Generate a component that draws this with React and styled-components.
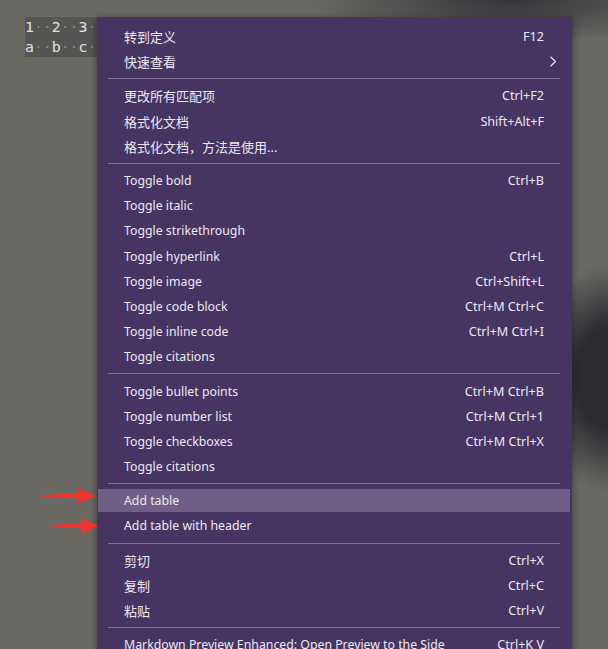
import React from 'react';
import styled, { createGlobalStyle } from 'styled-components';

const GlobalStyle = createGlobalStyle`
  html, body {
    margin: 0;
    height: 100%;
    overflow: hidden;
  }
  body {
    background:
      radial-gradient(ellipse 210px 45px at 510px 0px, rgba(48, 50, 55, 0.95), rgba(48, 50, 55, 0) 100%),
      radial-gradient(ellipse 80px 115px at 612px 378px, #2a2c31 45%, rgba(42, 44, 49, 0) 100%),
      #6b6964;
  }
  #root {
    height: 100%;
  }
`;

const Desktop = styled.div`
  position: relative;
  height: 100%;
  padding: 17px 0 0 25px;
  box-sizing: border-box;
`;

const CodeTable = styled.div`
  width: 120px;
  background-color: #555553;
  font-family: "DejaVu Sans Mono", "Liberation Mono", monospace;
  font-size: 14.8px;
  line-height: 20px;
  color: #e2e2e0;
`;

const CodeLine = styled.div`
  white-space: pre;
`;

const Ws = styled.span`
  color: #85847f;
`;

const Menu = styled.div`
  position: absolute;
  top: 17px;
  left: 97px;
  width: 475px;
  padding: 7px 0 0;
  background-color: #463462;
  box-shadow: 0 2px 8px rgba(0, 0, 0, 0.45);
  font-family: "Noto Sans", "Noto Sans CJK SC", sans-serif;
  color: #ece8f2;
`;

const Item = styled.div`
  height: 25.2px;
  padding: 1.1px 2px 1.1px 1px;
  box-sizing: border-box;
`;

const ItemInner = styled.div`
  height: 100%;
  display: flex;
  align-items: center;
  justify-content: space-between;
  padding: 0 26px;
  background-color: ${p => (p.$active ? '#6f5f88' : 'transparent')};
`;

const Label = styled.span`
  font-size: ${p => (p.$cjk ? '13px' : '12.3px')};
  white-space: nowrap;
`;

const Shortcut = styled.span`
  font-size: 12.6px;
  white-space: nowrap;
`;

const Chevron = styled.svg`
  width: 8px;
  height: 11px;
  margin-right: -13px;
`;

const Separator = styled.div`
  height: 1px;
  margin: 4px 12px 4px 11px;
  background-color: #807196;
`;

const Arrows = styled.svg`
  position: absolute;
  left: 0;
  top: 480px;
  width: 110px;
  height: 60px;
`;

const groups = [
  [
    { label: '转到定义', key: 'F12', cjk: true },
    { label: '快速查看', sub: true, cjk: true },
  ],
  [
    { label: '更改所有匹配项', key: 'Ctrl+F2', cjk: true },
    { label: '格式化文档', key: 'Shift+Alt+F', cjk: true },
    { label: '格式化文档，方法是使用...', cjk: true },
  ],
  [
    { label: 'Toggle bold', key: 'Ctrl+B' },
    { label: 'Toggle italic' },
    { label: 'Toggle strikethrough' },
    { label: 'Toggle hyperlink', key: 'Ctrl+L' },
    { label: 'Toggle image', key: 'Ctrl+Shift+L' },
    { label: 'Toggle code block', key: 'Ctrl+M Ctrl+C' },
    { label: 'Toggle inline code', key: 'Ctrl+M Ctrl+I' },
    { label: 'Toggle citations' },
  ],
  [
    { label: 'Toggle bullet points', key: 'Ctrl+M Ctrl+B' },
    { label: 'Toggle number list', key: 'Ctrl+M Ctrl+1' },
    { label: 'Toggle checkboxes', key: 'Ctrl+M Ctrl+X' },
    { label: 'Toggle citations' },
  ],
  [
    { label: 'Add table', active: true },
    { label: 'Add table with header' },
  ],
  [
    { label: '剪切', key: 'Ctrl+X', cjk: true },
    { label: '复制', key: 'Ctrl+C', cjk: true },
    { label: '粘贴', key: 'Ctrl+V', cjk: true },
  ],
  [
    { label: 'Markdown Preview Enhanced: Open Preview to the Side', key: 'Ctrl+K V' },
  ],
];

function Row({ cells }) {
  return (
    <CodeLine>
      {cells.map((c, i) => (
        <React.Fragment key={i}>
          {i > 0 && <Ws>··</Ws>}
          {c}
        </React.Fragment>
      ))}
      <Ws>··</Ws>
    </CodeLine>
  );
}

export default function App() {
  return (
    <>
      <GlobalStyle />
      <Desktop>
        <CodeTable>
          <Row cells={['1', '2', '3']} />
          <Row cells={['a', 'b', 'c']} />
        </CodeTable>

        <Menu>
          {groups.map((group, gi) => (
            <React.Fragment key={gi}>
              {gi > 0 && <Separator />}
              {group.map((item, ii) => (
                <Item key={ii}>
                  <ItemInner $active={item.active}>
                    <Label $cjk={item.cjk}>{item.label}</Label>
                    {item.key && <Shortcut>{item.key}</Shortcut>}
                    {item.sub && (
                      <Chevron viewBox="0 0 8 11">
                        <path d="M1.5 0.8 L6.5 5.5 L1.5 10.2" fill="none" stroke="#ece8f2" strokeWidth="1.2" />
                      </Chevron>
                    )}
                  </ItemInner>
                </Item>
              ))}
            </React.Fragment>
          ))}
        </Menu>

        <Arrows viewBox="0 480 110 60">
          <polygon points="40,495.3 78,493 78,488 96,496 78,503.5 78,498.5 40,496.6" fill="#ee3530" />
          <polygon points="50,525.3 82,523 82,518 98,526 82,533.5 82,528.5 50,526.6" fill="#ee3530" />
        </Arrows>
      </Desktop>
    </>
  );
}
